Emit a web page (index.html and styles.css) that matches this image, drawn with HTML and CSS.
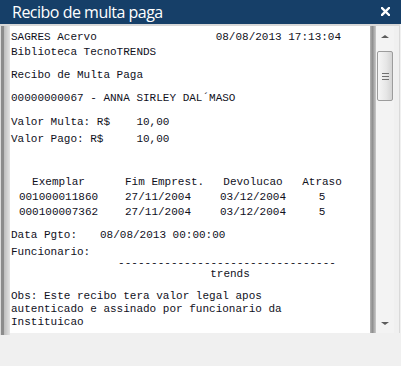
FILE: index.html
```html
<!DOCTYPE html>
<html lang="pt-BR">
<head>
<meta charset="UTF-8">
<meta name="viewport" content="width=device-width, initial-scale=1.0">
<title>Recibo de multa paga</title>
<link rel="stylesheet" href="styles.css">
</head>
<body>
<div class="window">
    <div class="titlebar">
        <span class="title">Recibo de multa paga</span>
        <svg class="close" width="9" height="9" viewBox="0 0 9 9">
            <path d="M1 1 L8 8 M8 1 L1 8" stroke="#fff" stroke-width="2.4" stroke-linecap="square"/>
        </svg>
    </div>
    <div class="viewer">
        <div class="edge"></div>
        <div class="page">
            <div class="head">
                <div>SAGRES Acervo                  08/08/2013 17:13:04</div>
                <div>Biblioteca TecnoTRENDS</div>
            </div>
            <div class="para">Recibo de Multa Paga</div>
            <div class="para">00000000067 - ANNA SIRLEY DAL´MASO</div>
            <div class="values">
                <div>Valor Multa: R$    10,00</div>
                <div>Valor Pago: R$     10,00</div>
            </div>
            <div class="items">
                <span>Exemplar</span><span class="left">Fim Emprest.</span><span>Devolucao</span><span>Atraso</span>
                <span>001000011860</span><span class="left">27/11/2004</span><span>03/12/2004</span><span>5</span>
                <span>000100007362</span><span class="left">27/11/2004</span><span>03/12/2004</span><span>5</span>
            </div>
            <div class="paid">
                <span class="label">Data Pgto:</span><span>08/08/2013 00:00:00</span>
            </div>
            <div class="staff">Funcionario:</div>
            <div class="sign">
                <div>---------------------------------</div>
                <div class="who">trends</div>
            </div>
            <div class="obs">
                <div>Obs: Este recibo tera valor legal apos</div>
                <div>autenticado e assinado por funcionario da</div>
                <div>Instituicao</div>
            </div>
        </div>
        <div class="rail"></div>
        <div class="scroll">
            <div class="arrow up"></div>
            <div class="thumb"></div>
            <div class="arrow down"></div>
        </div>
    </div>
</div>
</body>
</html>
```

FILE: styles.css
```css
body {
    margin: 0;
    padding: 0;
    background-color: #f0f0f0;
    font-family: "Open Sans", Arial, sans-serif;
}
.window {
    width: 401px;
    height: 366px;
}
.titlebar {
    height: 24px;
    background-color: #163f68;
    display: flex;
    align-items: center;
    justify-content: space-between;
    padding: 0 11px 0 12px;
}
.title {
    color: #fff;
    font-size: 16px;
    letter-spacing: -0.5px;
    line-height: 24px;
}
.close {
    display: block;
    margin-top: -2px;
}
.viewer {
    display: flex;
    height: 307px;
    border-top: 2px solid #d8d8d8;
    border-right: 1px solid #d9d9d9;
    padding-right: 5px;
    margin-right: 1px;
}
.edge {
    width: 10px;
    margin-bottom: -2px;
    background: linear-gradient(to right, #dcdcdc 0 1px, #8c8c8c 1px 4px, #bdbdbd 4px, #e4e4e4 10px);
}
.page {
    width: 359px;
    background-color: #fff;
    padding: 4px 0 0 1px;
    font-family: "Liberation Mono", "Courier New", monospace;
    font-size: 11px;
    line-height: 15px;
    color: #10101c;
    overflow: hidden;
}
/* texto do recibo mantém os espaços */
.page div, .page span {
    white-space: pre;
}
.page .head, .page .values, .page .items, .page .paid, .page .sign, .page .obs {
    white-space: normal;
}
.para {
    margin-top: 8px;
}
.values {
    margin-top: 8px;
    line-height: 16.6px;
}
.items {
    margin-top: 28px;
    display: grid;
    grid-template-columns: 95px 100px 94px 44px;
    text-align: center;
}
.items .left {
    text-align: left;
    padding-left: 19px;
}
.paid {
    margin-top: 8px;
    display: flex;
}
.paid .label {
    width: 89px;
}
.staff {
    margin-top: 2px;
}
.sign {
    margin-top: -2px;
    margin-left: 107px;
    width: 218px;
    line-height: 11px;
    text-align: center;
}
.sign .who {
    padding-left: 6px;
}
.obs {
    margin-top: 10px;
    line-height: 13px;
}
.rail {
    width: 6px;
    background: linear-gradient(to right, #b4b4b4, #8f8f8f 40%, #cacaca);
}
.scroll {
    width: 18px;
    background-color: #f3f3f3;
    display: flex;
    flex-direction: column;
    align-items: center;
}
.arrow {
    width: 0;
    height: 0;
    border-left: 4px solid transparent;
    border-right: 4px solid transparent;
}
.arrow.up {
    margin-top: 9px;
    border-bottom: 3px solid #5c5c5c;
}
.arrow.down {
    margin-top: auto;
    margin-bottom: 8px;
    border-top: 3px solid #5c5c5c;
}
.thumb {
    width: 14px;
    height: 48px;
    margin-top: 13px;
    border: 1px solid #9c9c9c;
    border-radius: 2px;
    background: linear-gradient(to right, #f6f6f6, #e6e6e6 60%, #d4d4d4);
    display: flex;
    align-items: center;
    justify-content: center;
}
.thumb::before {
    content: "";
    width: 7px;
    height: 7px;
    background: repeating-linear-gradient(#707070 0 1px, transparent 1px 3px);
}
```
